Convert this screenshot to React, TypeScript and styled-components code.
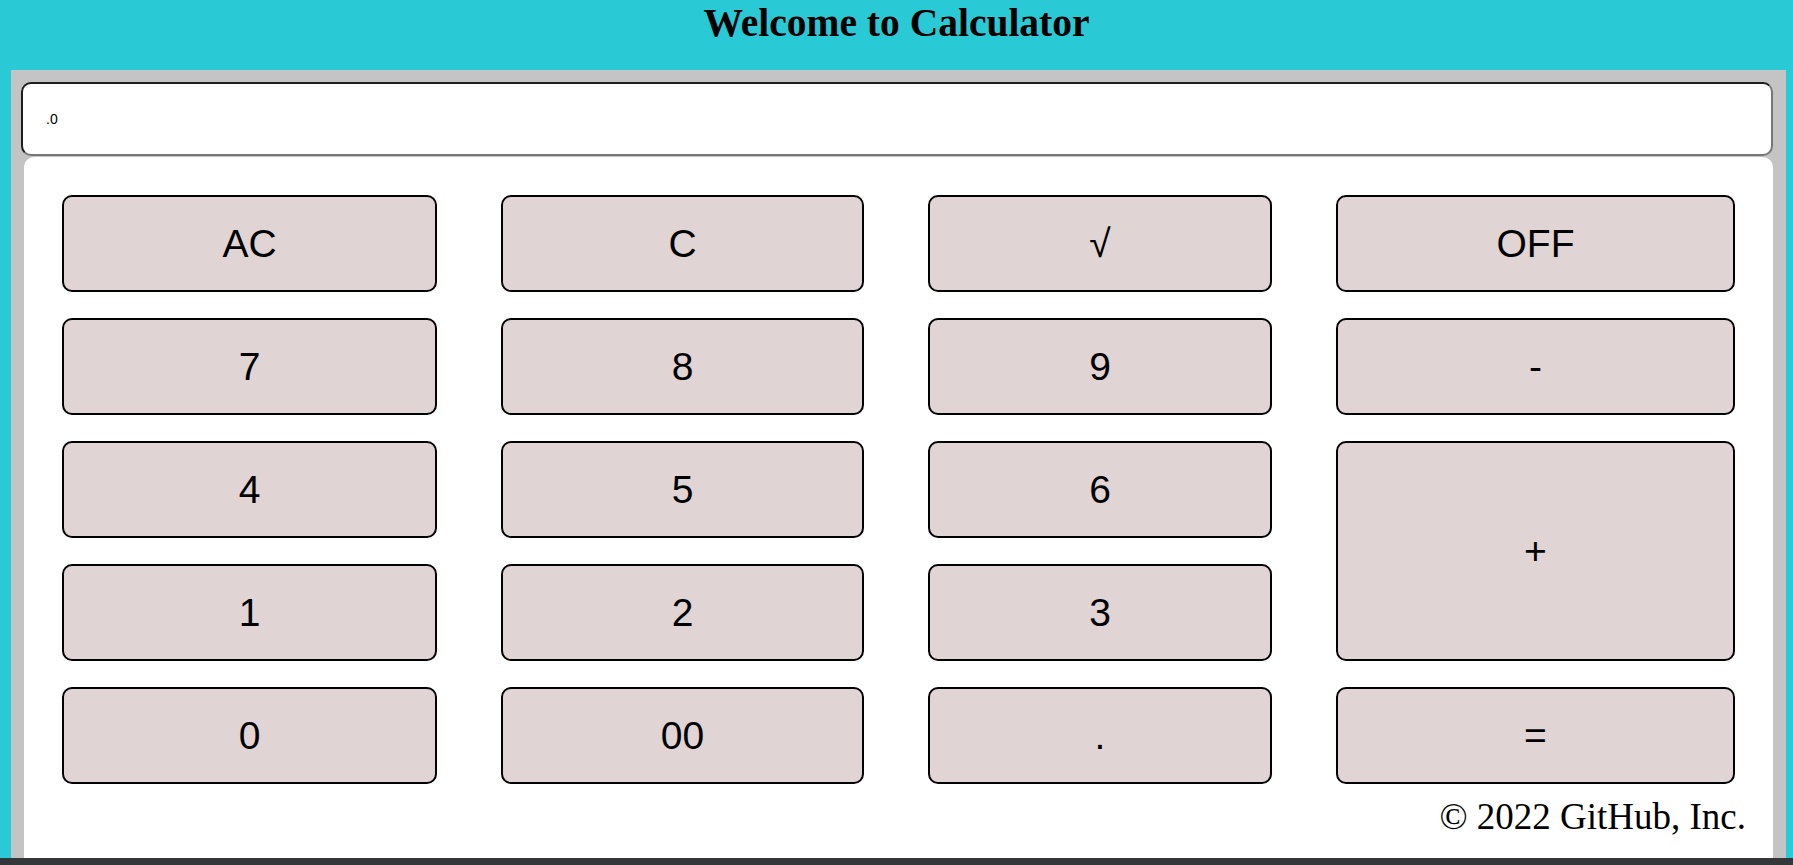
import React from "react";
import styled, { createGlobalStyle } from "styled-components";

const GlobalStyle = createGlobalStyle`
  html, body {
    margin: 0;
    padding: 0;
    height: 100%;
    background: #29cad5;
  }
  #root {
    height: 100%;
  }
`;

const Page = styled.div`
  height: 100vh;
  display: flex;
  flex-direction: column;
  overflow: hidden;
`;

const Header = styled.header`
  height: 70px;
  flex: none;
`;

const Title = styled.h1`
  margin: 0;
  text-align: center;
  font-family: "Liberation Serif", "Times New Roman", serif;
  font-weight: 700;
  font-size: 39.5px;
  line-height: normal;
  color: #000;
`;

const Frame = styled.main`
  flex: 1;
  min-height: 0;
  margin: 0 7px 0 11px;
  padding: 12px 13px 0 10px;
  background: #c4c4c4;
  display: flex;
  flex-direction: column;
`;

const Display = styled.div`
  flex: none;
  height: 74px;
  box-sizing: border-box;
  border: 2px solid;
  border-color: #1e1e1e #777 #777 #1e1e1e;
  border-radius: 10px;
  background: #fff;
  padding-left: 23px;
  display: flex;
  align-items: center;
  font-family: "Liberation Sans", Arial, sans-serif;
  font-size: 14px;
  color: #000;
`;

const Keypad = styled.section`
  flex: 1;
  margin: 1px 0 0 3px;
  background: #fff;
  border-radius: 10px 10px 0 0;
  padding-top: 38px;
  display: flex;
  flex-direction: column;
`;

const Grid = styled.div`
  display: grid;
  grid-template-columns: 375fr 363fr 344fr 399fr;
  grid-auto-rows: 97px;
  column-gap: 64px;
  row-gap: 26px;
  margin: 0 38px;
`;

const Key = styled.button<{ $rows?: number }>`
  grid-row: span ${(p) => p.$rows ?? 1};
  box-sizing: border-box;
  border: 2px solid #000;
  border-radius: 10px;
  background: #e1d4d5;
  color: #000;
  font-family: "Liberation Sans", Arial, sans-serif;
  font-size: 39px;
  padding: 0;
  cursor: pointer;
`;

const Footer = styled.p`
  margin: 11px 0 0;
  padding-right: 27px;
  text-align: right;
  font-family: "Liberation Serif", "Times New Roman", serif;
  font-size: 37px;
  color: #000;
`;

const BottomBar = styled.div`
  flex: none;
  height: 7px;
  background: #35363a;
`;

const keys: { label: string; rows?: number }[] = [
  { label: "AC" },
  { label: "C" },
  { label: "\u221A" },
  { label: "OFF" },
  { label: "7" },
  { label: "8" },
  { label: "9" },
  { label: "-" },
  { label: "4" },
  { label: "5" },
  { label: "6" },
  { label: "+", rows: 2 },
  { label: "1" },
  { label: "2" },
  { label: "3" },
  { label: "0" },
  { label: "00" },
  { label: "." },
  { label: "=" },
];

export default function App() {
  return (
    <>
      <GlobalStyle />
      <Page>
        <Header>
          <Title>Welcome to Calculator</Title>
        </Header>
        <Frame>
          <Display>.0</Display>
          <Keypad>
            <Grid>
              {keys.map((k) => (
                <Key key={k.label} $rows={k.rows}>
                  {k.label}
                </Key>
              ))}
            </Grid>
            <Footer>© 2022 GitHub, Inc.</Footer>
          </Keypad>
        </Frame>
        <BottomBar />
      </Page>
    </>
  );
}
